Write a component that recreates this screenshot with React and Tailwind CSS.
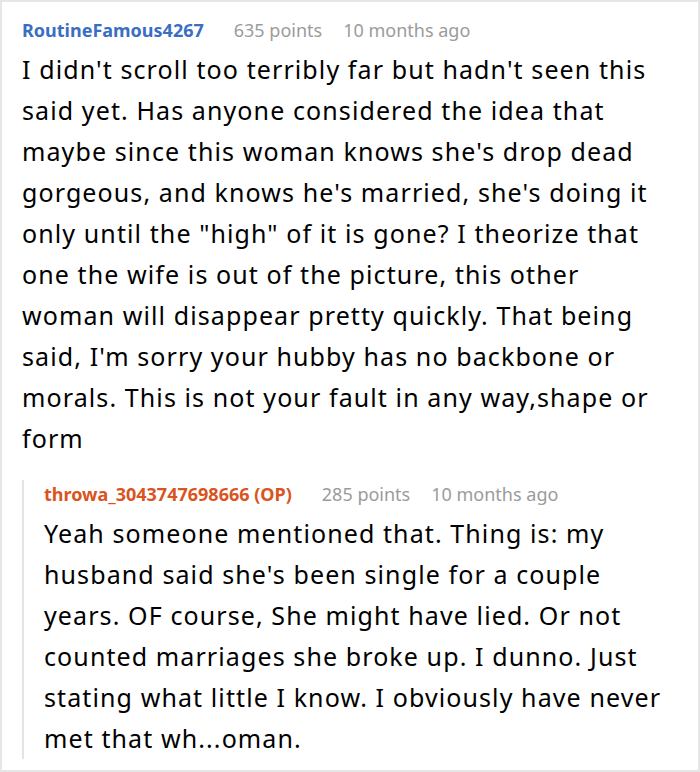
import React from 'react';

const font = { fontFamily: '"Noto Sans", "Open Sans", sans-serif' };

function Header({ name, color, points, time }) {
  return (
    <div className="flex items-center gap-[30px] text-[18px] leading-[24px]">
      <span className={`font-bold ${color}`}>{name}</span>
      <span className="text-[#9b9b9b] flex gap-[21px]">
        <span>{points}</span>
        <span>{time}</span>
      </span>
    </div>
  );
}

export default function App() {
  return (
    <div
      className="w-[700px] h-[772px] bg-white border-2 border-[#e6e6e6] overflow-hidden pl-[20px] pr-[26px] pt-[16px] text-black"
      style={font}
    >
      <Header name="RoutineFamous4267" color="text-[#3a6ec2]" points="635 points" time="10 months ago" />
      <p className="mt-[7px] text-[25px] leading-[41px] tracking-[1.1px]">
        I didn't scroll too terribly far but hadn't seen this said yet. Has anyone considered the idea that maybe since this woman knows she's drop dead gorgeous, and knows he's married, she's doing it only until the "high" of it is gone? I theorize that one the wife is out of the picture, this other woman will disappear pretty quickly. That being said, I'm sorry your hubby has no backbone or morals. This is not your fault in any way,shape or form
      </p>
      <div className="mt-[21px] border-l-2 border-[#e4e4e4] pl-[20px] pt-[2px]">
        <Header name="throwa_3043747698666 (OP)" color="text-[#d9541e]" points="285 points" time="10 months ago" />
        <p className="mt-[7px] text-[25px] leading-[41px] tracking-[1.1px]">
          Yeah someone mentioned that. Thing is: my husband said she's been single for a couple years. OF course, She might have lied. Or not counted marriages she broke up. I dunno. Just stating what little I know. I obviously have never met that wh...oman.
        </p>
      </div>
    </div>
  );
}
